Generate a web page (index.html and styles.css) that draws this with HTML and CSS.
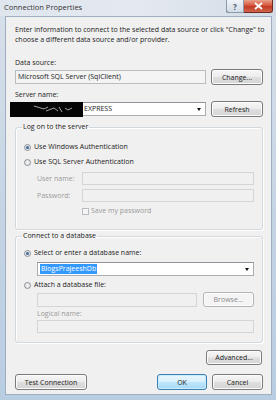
FILE: index.html
```html
<!DOCTYPE html>
<html lang="en">
<head>
  <meta charset="UTF-8">
  <title>Connection Properties</title>
  <link rel="stylesheet" href="styles.css">
</head>
<body>
<div class="window">
  <div class="titlebar">
    <span class="title">Connection Properties</span>
    <div class="caption">
      <div class="cap cap-help">?</div>
      <div class="cap cap-close">
        <svg width="9" height="8" viewBox="0 0 9 8"><path d="M1 1 L8 7 M8 1 L1 7" stroke="#fff" stroke-width="1.8"/></svg>
      </div>
    </div>
  </div>

  <div class="client">
    <p class="intro">Enter information to connect to the selected data source or click "Change" to<br>choose a different data source and/or provider.</p>

    <div class="lbl lbl-data">Data source:</div>
    <div class="row">
      <div class="field readonly">Microsoft SQL Server (SqlClient)</div>
      <button class="btn">Change...</button>
    </div>

    <div class="lbl lbl-server">Server name:</div>
    <div class="row">
      <div class="field combo server">
        <span class="redact">
          <svg width="73" height="15" viewBox="0 0 73 15"><path d="M24 4 L34 7 L38 5 M36 9 L44 6 L48 9 M49 5 L52 10 M55 6 L58 8 L62 6" stroke="#ccc" stroke-width="0.8" fill="none"/></svg>
        </span>
        <span class="server-text">EXPRESS</span>
        <span class="arrow"></span>
      </div>
      <button class="btn">Refresh</button>
    </div>

    <fieldset class="group logon">
      <legend>Log on to the server</legend>
      <div class="opt"><span class="radio on"></span>Use Windows Authentication</div>
      <div class="opt opt-sql"><span class="radio"></span>Use SQL Server Authentication</div>
      <div class="cred cred-user"><span class="cred-lbl">User name:</span><div class="field disabled"></div></div>
      <div class="cred cred-pass"><span class="cred-lbl">Password:</span><div class="field disabled"></div></div>
      <div class="save"><span class="check"></span>Save my password</div>
    </fieldset>

    <fieldset class="group database">
      <legend>Connect to a database</legend>
      <div class="opt"><span class="radio on"></span>Select or enter a database name:</div>
      <div class="field combo dbname"><span class="selected">BlogsPrajeeshDb</span><span class="arrow"></span></div>
      <div class="opt opt-attach"><span class="radio"></span>Attach a database file:</div>
      <div class="file-row">
        <div class="field disabled"></div>
        <button class="btn btn-disabled">Browse...</button>
      </div>
      <div class="logical">Logical name:</div>
      <div class="field disabled logical-field"></div>
    </fieldset>

    <div class="advanced-row">
      <button class="btn btn-advanced">Advanced...</button>
    </div>

    <div class="bottom-row">
      <button class="btn btn-test">Test Connection</button>
      <div class="spacer"></div>
      <button class="btn btn-ok">OK</button>
      <button class="btn btn-cancel">Cancel</button>
    </div>
  </div>
</div>
</body>
</html>
```

FILE: styles.css
```css
* {
    margin: 0;
    padding: 0;
    box-sizing: border-box;
}

body {
    width: 276px;
    height: 400px;
    overflow: hidden;
    background: linear-gradient(180deg, #d7e0ea, #c3d3e4 60%, #b9cde2);
    font-family: 'Open Sans', sans-serif;
    font-size: 7px;
    color: #222;
}

.window {
    width: 276px;
    height: 400px;
    display: flex;
    flex-direction: column;
}

/* title bar */

.titlebar {
    height: 16px;
    display: flex;
    align-items: flex-start;
    padding-left: 4px;
    background: linear-gradient(90deg, #dfe6ee, #e4e9ef 50%, #d2dce7);
}

.title {
    flex: 1;
    font-size: 7.5px;
    line-height: 14px;
    color: #333;
}

.caption {
    width: 47px;
    height: 13px;
    display: flex;
    margin-right: 3px;
    border: 1px solid #6e2a1f;
    border-top: none;
    border-radius: 0 0 3px 3px;
    background: linear-gradient(#e8a08c, #d5563d 45%, #c23b25 55%, #d0664b);
}

.cap {
    height: 12px;
    display: flex;
    align-items: center;
    justify-content: center;
}

.cap-help {
    width: 18px;
    margin-left: -1px;
    border-right: 1px solid #8a9aae;
    border-left: 1px solid #8a9aae;
    border-bottom: 1px solid #8a9aae;
    border-radius: 0 0 0 3px;
    background: linear-gradient(#f1f4f8, #d3dce6);
    color: #4a5a70;
    font-size: 8px;
    font-weight: 700;
    height: 13px;
}

.cap-close {
    flex: 1;
}

.cap-close svg {
    display: block;
}

/* client area */

.client {
    flex: 1;
    margin: 0 4px 5px 5px;
    padding: 8px 8px 0 9px;
    background: #f0f0f0;
    border: 1px solid #9eafc2;
    display: flex;
    flex-direction: column;
}

.intro {
    line-height: 10px;
    white-space: nowrap;
}

.lbl {
    line-height: 10px;
}

.lbl-data {
    margin-top: 13px;
}

.lbl-server {
    margin-top: 5px;
}

.row {
    margin-top: 1px;
    height: 16px;
    display: flex;
    align-items: center;
    gap: 5px;
}

.field {
    height: 14px;
    flex: 1;
    background: #fff;
    border: 1px solid #abadb3;
    border-top-color: #8f949b;
    line-height: 12px;
    padding-left: 2px;
    position: relative;
}

.field.readonly {
    background: #f4f4f4;
    border-color: #b9bcc1;
}

.field.disabled {
    background: #f0f0f0;
    border-color: #d3d5d9;
}

.combo {
    display: flex;
    align-items: center;
}

.arrow {
    position: absolute;
    right: 4px;
    top: 5px;
    border-left: 2px solid transparent;
    border-right: 2px solid transparent;
    border-top: 3px solid #111;
}

.server {
    padding-left: 0;
    overflow: visible;
}

.redact {
    width: 73px;
    height: 15px;
    margin-left: -6px;
    background: #050505;
    display: block;
}

.redact svg {
    display: block;
}

.server-text {
    margin-left: 1px;
}

/* buttons */

.btn {
    width: 52px;
    height: 16px;
    font-family: inherit;
    font-size: 7px;
    color: #222;
    border: 1px solid #7a7a7a;
    border-radius: 3px;
    background: linear-gradient(#f6f6f6, #ececec 48%, #dedede 52%, #d4d4d4);
    box-shadow: inset 0 0 0 1px #fcfcfc;
}

.btn-disabled {
    width: 51px;
    height: 15px;
    color: #8b8b8b;
    border-color: #b2b5b8;
    background: #f4f4f4;
}

/* group boxes */

.group {
    border: 1px solid #d1d9df;
    border-radius: 3px;
    box-shadow: inset 1px 1px 0 #fff, 1px 1px 0 #fff;
    padding: 4px 8px 0 8px;
}

.group legend {
    margin-left: -2px;
    padding: 0 1px;
    line-height: 10px;
}

.logon {
    margin-top: 5px;
    height: 108px;
}

.database {
    margin-top: 1px;
    height: 112px;
}

.opt {
    display: flex;
    align-items: center;
    line-height: 10px;
}

.logon .opt {
    margin-top: 6px;
}

.logon .opt-sql {
    margin-top: 5px;
}

.radio {
    width: 7px;
    height: 7px;
    border-radius: 50%;
    border: 1px solid #8d9096;
    background: radial-gradient(circle, #f4f4f4, #d9dadc);
    margin-right: 3px;
    position: relative;
}

.radio.on::after {
    content: "";
    position: absolute;
    left: 1px;
    top: 1px;
    width: 3px;
    height: 3px;
    border-radius: 50%;
    background: #3c6a9a;
}

.cred {
    display: flex;
    align-items: center;
    height: 13px;
    margin-left: 13px;
    margin-right: 0;
}

.cred-user {
    margin-top: 5px;
}

.cred-pass {
    margin-top: 4px;
}

.cred-lbl {
    width: 45px;
    color: #9a9a9a;
}

.cred .field {
    height: 13px;
}

.save {
    display: flex;
    align-items: center;
    margin: 4px 0 0 58px;
    line-height: 10px;
    color: #9a9a9a;
}

.check {
    width: 7px;
    height: 7px;
    border: 1px solid #b9bcc1;
    background: #f4f4f4;
    margin-right: 2px;
}

.database .opt {
    margin-top: 3px;
}

.dbname {
    flex: none;
    height: 14px;
    margin: 4px 0 0 13px;
}

.selected {
    background: #3399ff;
    color: #fff;
    line-height: 10px;
    padding: 0 1px;
}

.database .opt-attach {
    margin-top: 4px;
}

.file-row {
    display: flex;
    align-items: center;
    gap: 6px;
    margin: 2px 0 0 13px;
    height: 15px;
}

.file-row .field {
    height: 14px;
}

.logical {
    margin: 2px 0 0 13px;
    line-height: 10px;
    color: #9a9a9a;
}

.logical-field {
    flex: none;
    height: 13px;
    margin: 1px 0 0 13px;
}

.advanced-row {
    display: flex;
    justify-content: flex-end;
    margin-top: 7px;
    padding-right: 1px;
}

.btn-advanced {
    width: 56px;
    height: 15px;
}

.bottom-row {
    display: flex;
    margin-top: 9px;
    gap: 5px;
}

.btn-test {
    width: 72px;
}

.spacer {
    flex: 1;
}

.btn-ok {
    width: 50px;
    border-color: #3c7fb1;
    background: linear-gradient(#eaf6fd, #d9f0fc 48%, #bee6fd 52%, #a7d9f5);
    box-shadow: inset 0 0 0 1px #c8ecff;
}

.btn-cancel {
    width: 51px;
}
```
